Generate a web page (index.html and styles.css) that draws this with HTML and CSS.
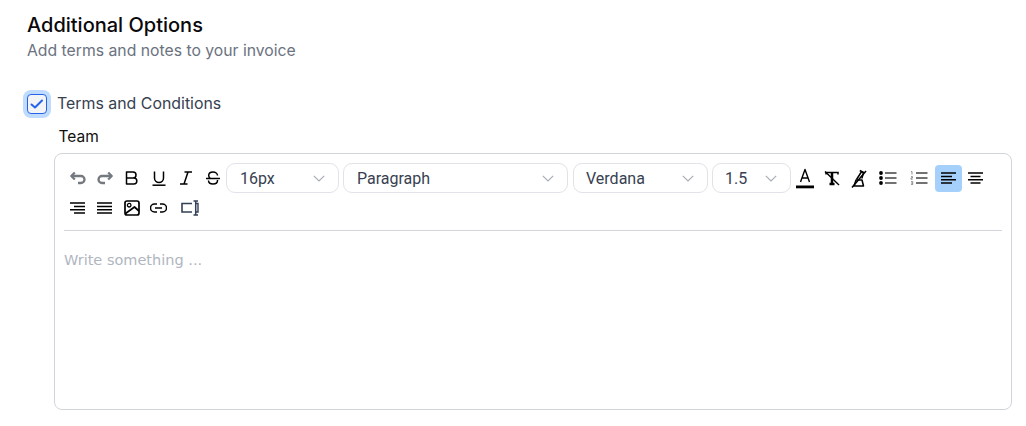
FILE: index.html
```html
<!DOCTYPE html>
<html lang="en">
<head>
<meta charset="utf-8">
<title>Additional Options</title>
<link rel="stylesheet" href="styles.css">
</head>
<body>
<section class="options">
  <h2 class="title">Additional Options</h2>
  <p class="subtitle">Add terms and notes to your invoice</p>
  <label class="check-row">
    <span class="checkbox">
      <svg viewBox="0 0 20 20" width="20" height="20" fill="none" stroke="#2563eb" stroke-width="2" stroke-linecap="round" stroke-linejoin="round"><path d="M4.500 10.500l3.500 3 7-7"/></svg>
    </span>
    <span class="check-label">Terms and Conditions</span>
  </label>
  <div class="field">
    <div class="field-label">Team</div>
    <div class="editor">
      <div class="toolbar">
        <button class="tool muted"><svg viewBox="0 0 18 18" width="18" height="18" fill="none" stroke="currentColor" stroke-width="2.300" stroke-linejoin="round"><path d="M5.800 3.500L2.300 7l3.500 3.500"/><path d="M3 7h9a3.500 3.500 0 0 1 0 7H9"/></svg></button>
        <button class="tool muted"><svg viewBox="0 0 18 18" width="18" height="18" fill="none" stroke="currentColor" stroke-width="2.300" stroke-linejoin="round"><path d="M12.200 3.500L15.700 7l-3.500 3.500"/><path d="M15 7H6a3.500 3.500 0 0 0 0 7h3"/></svg></button>
        <button class="tool"><svg viewBox="0 0 18 18" width="18" height="18" fill="none" stroke="currentColor" stroke-width="1.500" stroke-linejoin="round"><path d="M3.500 3h6.500a3 3 0 0 1 0 6H3.500zM3.500 9h7.300a3 3 0 0 1 0 6H3.500z"/></svg></button>
        <button class="tool"><svg viewBox="0 0 18 18" width="18" height="18" fill="none" stroke="currentColor" stroke-width="1.500"><path d="M4.500 2.500V9a4.500 4.500 0 0 0 9 0V2.500"/><path d="M2.500 16.200h13"/></svg></button>
        <button class="tool"><svg viewBox="0 0 18 18" width="18" height="18" fill="none" stroke="currentColor" stroke-width="1.500"><path d="M7.500 3h7.500M3 15h7.500M11 3L7 15"/></svg></button>
        <button class="tool"><svg viewBox="0 0 18 18" width="18" height="18" fill="none" stroke="currentColor" stroke-width="1.500"><path d="M2 9.500h14"/><path d="M13.500 6.500C13.500 4.500 11.500 3 9 3 6.500 3 4.700 4.300 4.700 6.500c0 1.200.5 2.200 1.500 3"/><path d="M13.500 11v.5c0 2.300-2 3.500-4.500 3.500s-4.500-1.300-4.500-3.500"/></svg></button>
        <div class="select s-size"><span>16px</span><svg class="chev" viewBox="0 0 12 7" width="12" height="7" fill="none" stroke="currentColor" stroke-width="1.200"><path d="M.8 .8L6 6l5.200-5.200"/></svg></div>
        <div class="select s-block"><span>Paragraph</span><svg class="chev" viewBox="0 0 12 7" width="12" height="7" fill="none" stroke="currentColor" stroke-width="1.200"><path d="M.8 .8L6 6l5.200-5.200"/></svg></div>
        <div class="select s-font"><span>Verdana</span><svg class="chev" viewBox="0 0 12 7" width="12" height="7" fill="none" stroke="currentColor" stroke-width="1.200"><path d="M.8 .8L6 6l5.200-5.200"/></svg></div>
        <div class="select s-line"><span>1.5</span><svg class="chev" viewBox="0 0 12 7" width="12" height="7" fill="none" stroke="currentColor" stroke-width="1.200"><path d="M.8 .8L6 6l5.200-5.200"/></svg></div>
        <button class="tool"><svg viewBox="0 0 18 22" width="18" height="22" fill="none" stroke="currentColor" stroke-width="1.400" stroke-linejoin="round"><path d="M4.500 15L9 2.500 13.500 15M6 11h6"/><rect x="0" y="18.500" width="18" height="2.800" fill="currentColor" stroke="none"/></svg></button>
        <button class="tool"><svg viewBox="0 0 18 18" width="18" height="18" fill="none" stroke="currentColor"><path d="M3 5.500V3.500h12v2" stroke-width="1.500"/><path d="M9 3.500v11M6.500 15h5" stroke-width="2.500"/><path d="M2 2.500L16 16" stroke-width="1.400"/></svg></button>
        <button class="tool"><svg viewBox="0 0 18 20" width="18" height="20" fill="none" stroke="currentColor" stroke-width="1.500" stroke-linejoin="round"><path d="M6.500 11.500L11 4.500c.8-1.300 2.800-.6 2.300 1l-1.500 5"/><path d="M9.800 2.500l3.500 2"/><path d="M6 12h6l1.500 6h-9.500z"/><path d="M2 19.500L16 3"/></svg></button>
        <button class="tool tool-list"><svg viewBox="0 0 18 14" width="18" height="14" fill="none"><g fill="currentColor"><circle cx="2" cy="2" r="1.900"/><circle cx="2" cy="7" r="1.900"/><circle cx="2" cy="12" r="1.900"/></g><path d="M6 2h11.500M6 7h11.500M6 12h11.500" stroke="#444" stroke-width="1.500"/></svg></button>
        <button class="tool tool-list tool-list-b"><svg viewBox="0 0 18 14" width="18" height="14" fill="none"><path d="M1 .8l1-.3v3M1 5.600h1.500v1.300H1v1.300h1.700M1 10.600h1.700v3H1M1 12.100h1.500" stroke="#666" stroke-width=".7"/><path d="M6 2h11.500M6 7h11.500M6 12h11.500" stroke="#444" stroke-width="1.500"/></svg></button>
        <button class="tool active"><svg viewBox="0 0 15 12" width="15" height="12" stroke="currentColor" stroke-width="1.500"><path d="M0 1h15M0 4.400h11M0 7.800h15M0 11h11"/></svg></button>
        <button class="tool"><svg viewBox="0 0 15 12" width="15" height="12" stroke="currentColor" stroke-width="1.500"><path d="M0 1h15M2.500 4.400h10M0 7.800h15M2.500 11h10"/></svg></button>
        <button class="tool"><svg viewBox="0 0 15 12" width="15" height="12" stroke="currentColor" stroke-width="1.500"><path d="M0 1h15M4 4.400h11M0 7.800h15M4 11h11"/></svg></button>
        <button class="tool"><svg viewBox="0 0 15 12" width="15" height="12" stroke="currentColor" stroke-width="1.500"><path d="M0 1h15M0 4.400h15M0 7.800h15M0 11h15"/></svg></button>
        <button class="tool"><svg viewBox="0 0 16 16" width="16" height="16" fill="none" stroke="currentColor" stroke-width="1.700" stroke-linejoin="round"><rect x="1" y="1" width="14" height="14" rx="2"/><circle cx="5.200" cy="5.200" r="1.800" stroke-width="1.300"/><path d="M1.500 13.500L10.500 7l4.500 4"/></svg></button>
        <button class="tool"><svg viewBox="0 0 17 10" width="17" height="10" fill="none" stroke="currentColor" stroke-width="1.500"><path d="M7 1H4.500a4 4 0 0 0 0 8H7M10 1h2.500a4 4 0 0 1 0 8H10M5 5h7"/></svg></button>
        <button class="tool tool-wide"><svg viewBox="0 0 18 16" width="18" height="16" fill="none" stroke="#334155"><path d="M11 3.500H1v8.500h10" stroke-width="1.600"/><path d="M12.500 1h4.500M12.500 15h4.500M14.700 1v14" stroke-width="1.500"/><path d="M14.700 3.500h2.300v8.500h-2.300" stroke-width="1.400"/></svg></button>
      </div>
      <div class="content">Write something ...</div>
    </div>
  </div>
</section>
</body>
</html>
```

FILE: styles.css
```css
* { box-sizing: border-box; }
html, body { margin: 0; padding: 0; background: #fff; }
body { font-family: Inter, "Noto Sans", sans-serif; color: #000; }
.options { padding: 13px 14px 0 27px; }
.title { margin: 0; font-size: 20px; line-height: 24px; font-weight: 500; color: #09090b; }
.subtitle { margin: 3px 0 0; font-size: 15.750px; line-height: 22px; color: #6b7280; }
.check-row { display: flex; align-items: center; gap: 10px; margin-top: 32px; }
.checkbox { width: 20px; height: 20px; border: 1px solid #2563eb; border-radius: 4px; background: #f3f4f6; box-shadow: 0 0 0 4px #bfdbfe; display: flex; align-items: center; justify-content: center; }
.checkbox svg { flex: none; }
.check-label { font-size: 15.900px; line-height: 20px; color: #374151; }
.field { margin-left: 27px; }
.field-label { margin: 14px 0 7px 4.500px; font-size: 15.500px; line-height: 18px; color: #111; }
.editor { height: 257px; border: 1px solid #d1d5db; border-radius: 8px; padding: 9px 9px 0; }
.toolbar { display: flex; flex-wrap: wrap; align-items: center; border-bottom: 1px solid #d4d4dc; padding: 0 0 7px; }
.tool { width: 27px; height: 27px; margin: 1.500px 0; padding: 0; border: 0; border-radius: 4px; background: transparent; color: #000; display: flex; align-items: center; justify-content: center; }
.tool.muted { color: #74787f; }
.tool-list { width: 31px; }
.tool-list-b { width: 32px; }
.tool-wide { width: 36px; }
.tool.active { background: #a5d0fb; }
.select { height: 30px; margin-right: 4px; padding: 0 13px 0 12px; border: 1px solid #e2e2ea; border-radius: 9px; background: #fff; display: flex; align-items: center; justify-content: space-between; font-family: Roboto, sans-serif; font-size: 16px; color: #374151; }
.chev { color: #a8adb6; }
.s-size { width: 113px; padding-left: 13px; }
.s-block { width: 225px; margin-right: 5px; padding-left: 13px; }
.s-font { width: 135px; }
.s-line { width: 79px; margin-right: 0; }
.content { padding: 20px 0 0; font-family: "DejaVu Sans", Verdana, sans-serif; font-size: 14.500px; line-height: 18px; color: #b0b6bf; }
```
